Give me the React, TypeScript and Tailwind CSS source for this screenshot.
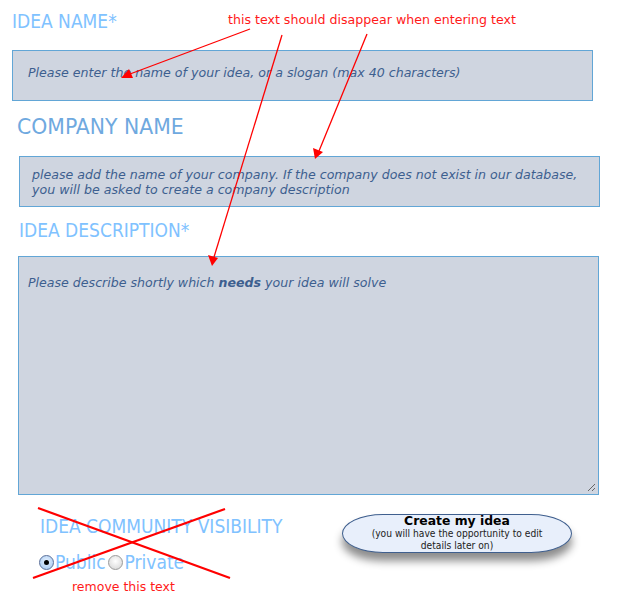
import React from "react";

const sans = "font-['DejaVu_Sans',Verdana,sans-serif]";
const head = "font-['DejaVu_Sans_Condensed','DejaVu_Sans',sans-serif]";

function Radio({ checked }: { checked?: boolean }) {
  return (
    <span
      className={
        "inline-flex items-center justify-center w-[15px] h-[15px] rounded-full border " +
        (checked
          ? "border-[#5a6f9a] bg-[radial-gradient(circle_at_50%_40%,#e8f2ff,#9cc3ee)]"
          : "border-[#9a9a9a] bg-[radial-gradient(circle_at_50%_40%,#ffffff,#d2d2d2)]")
      }
    >
      {checked && <span className="w-[5px] h-[5px] rounded-full bg-black" />}
    </span>
  );
}

export default function App() {
  return (
    <div className={"relative w-[636px] h-[600px] bg-white overflow-hidden " + sans}>
      <div className="pt-[9px]">
        <div className={"ml-[12px] text-[19px] leading-[24px] text-[#80c2ff] " + head}>IDEA NAME*</div>
        <div className="ml-[12px] mt-[17px] w-[581px] h-[51px] border border-[#62a6d6] bg-[#cfd5e0] flex items-center pl-[15px] pb-[4px]">
          <span className="italic text-[12.6px] text-[#3d5f8f]">
            Please enter the name of your idea, or a slogan (max 40 characters)
          </span>
        </div>

        <div className="ml-[17px] mt-[13px] text-[20.4px] leading-[26px] text-[#6fa9df]">COMPANY NAME</div>
        <div className="ml-[19px] mt-[16px] w-[581px] h-[51px] border border-[#62a6d6] bg-[#cfd5e0] flex flex-col justify-center pl-[12px]">
          <span className="italic text-[12.6px] leading-[15px] text-[#3d5f8f]">
            please add the name of your company. If the company does not exist in our database,
          </span>
          <span className="italic text-[12.6px] leading-[15px] text-[#3d5f8f]">
            you will be asked to create a company description
          </span>
        </div>

        <div className={"ml-[19px] mt-[11px] text-[19px] leading-[24px] text-[#80c2ff] " + head}>
          IDEA DESCRIPTION*
        </div>
        <div className="relative ml-[18px] mt-[14px] w-[581px] h-[239px] border border-[#62a6d6] bg-[#cfd5e0] pl-[9px] pt-[13px]">
          <span className="italic text-[12.6px] leading-[16px] text-[#3d5f8f]">
            Please describe shortly which <b>needs</b> your idea will solve
          </span>
          <svg className="absolute right-[2px] bottom-[2px]" width="9" height="9" viewBox="0 0 9 9">
            <line x1="1" y1="8" x2="8" y2="1" stroke="#666" strokeWidth="1" />
            <line x1="5" y1="8" x2="8" y2="5" stroke="#666" strokeWidth="1" />
          </svg>
        </div>

        <div className="flex mt-[16px]">
          <div className="ml-[40px] w-[302px]">
            <div className={"text-[19px] leading-[24px] text-[#80c2ff] mt-[3px] " + head}>
              IDEA COMMUNITY VISIBILITY
            </div>
            <div className={"flex items-center mt-[13px] -ml-[1px] text-[19px] leading-[22px] text-[#80c2ff] " + head}>
              <Radio checked />
              <span className="mr-[2px] ml-[1px]">Public</span>
              <Radio />
              <span className="ml-[2px]">Private</span>
            </div>
            <div className="ml-[32px] mt-[6px] text-[12.5px] leading-[16px] text-[#ff1a1a]">remove this text</div>
          </div>
          <div className="w-[230px] h-[39px] mt-[3px] rounded-[42px/20px] border border-[#3f5f8e] bg-[#e8effb] shadow-[0_8px_8px_rgba(0,0,0,0.45)] flex flex-col items-center justify-center pb-[1px]">
            <div className="text-[12.4px] leading-[14px] font-bold text-black">Create my idea</div>
            <div className={"text-[10.2px] leading-[12px] text-[#222] text-center " + head}>
              (you will have the opportunity to edit
              <br />
              details later on)
            </div>
          </div>
        </div>
      </div>

      <div className="absolute left-[228px] top-[11px] text-[12.6px] leading-[18px] text-[#ff1a1a]">
        this text should disappear when entering text
      </div>

      <svg className="absolute inset-0 pointer-events-none" width="636" height="600" viewBox="0 0 636 600">
        <g stroke="#ff0000" strokeWidth="1.3" fill="#ff0000">
          <line x1="250" y1="29" x2="130" y2="74" />
          <polygon points="121,78 129,69 133,78" stroke="none" />
          <line x1="282" y1="35" x2="214" y2="257" />
          <polygon points="212,266 208,255 218,258" stroke="none" />
          <line x1="367" y1="34" x2="319" y2="151" />
          <polygon points="315,159 313,148 323,152" stroke="none" />
          <line x1="38" y1="508" x2="230" y2="578" strokeWidth="2.2" />
          <line x1="33" y1="578" x2="225" y2="509" strokeWidth="2.2" />
        </g>
      </svg>
    </div>
  );
}
